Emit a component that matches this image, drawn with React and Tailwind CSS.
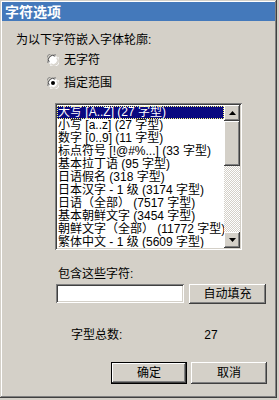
import React from "react";

const FONT = { fontFamily: '"Liberation Sans","Noto Sans CJK SC",sans-serif' };

const raised =
  "shadow-[inset_-1px_-1px_#404040,inset_1px_1px_#ffffff,inset_-2px_-2px_#808080,inset_2px_2px_#d4d0c8]";
const sunken =
  "shadow-[inset_1px_1px_#808080,inset_-1px_-1px_#ffffff,inset_2px_2px_#404040,inset_-2px_-2px_#d4d0c8]";

function Radio({ checked }) {
  return (
    <svg width="12" height="12" viewBox="0 0 12 12" className="shrink-0">
      <circle cx="6" cy="6" r="5" fill="#fff" />
      <path d="M1.2 9 A5.5 5.5 0 0 1 9 1.2" stroke="#808080" strokeWidth="1" fill="none" />
      <path d="M2.2 8.2 A4.3 4.3 0 0 1 8.2 2.2" stroke="#404040" strokeWidth="1" fill="none" />
      <path d="M10.8 3 A5.5 5.5 0 0 1 3 10.8" stroke="#ffffff" strokeWidth="1" fill="none" />
      <path d="M9.8 3.8 A4.3 4.3 0 0 1 3.8 9.8" stroke="#d4d0c8" strokeWidth="1" fill="none" />
      {checked && <circle cx="6" cy="6" r="2" fill="#000" />}
    </svg>
  );
}

const items = [
  "大写 [A..Z] (27 字型)",
  "小写 [a..z] (27 字型)",
  "数字 [0..9] (11 字型)",
  "标点符号 [!@#%...] (33 字型)",
  "基本拉丁语 (95 字型)",
  "日语假名 (318 字型)",
  "日本汉字 - 1 级 (3174 字型)",
  "日语（全部） (7517 字型)",
  "基本朝鲜文字 (3454 字型)",
  "朝鲜文字（全部） (11772 字型)",
  "繁体中文 - 1 级 (5609 字型)",
];

export default function App() {
  return (
    <div className="w-[279px] h-[400px] bg-[#d4d0c8]" style={FONT}>
      <div
        className={`w-[277px] h-[398px] bg-[#d4d0c8] flex flex-col text-[12px] leading-[14px] text-black shadow-[inset_-1px_-1px_#404040,inset_1px_1px_#d4d0c8,inset_-2px_-2px_#808080,inset_2px_2px_#ffffff]`}
      >
        <div className="mt-[2px] mx-[2px] h-[19px] bg-[#4479bb] flex items-center pl-[3px] text-white font-bold text-[14px]">
          字符选项
        </div>

        <div className="mt-[12px] ml-[16px] h-[14px]">为以下字符嵌入字体轮廓:</div>

        <div className="mt-[6px] ml-[47px] h-[14px] flex items-center gap-[5px]">
          <Radio />
          <span>无字符</span>
        </div>
        <div className="mt-[9px] ml-[47px] h-[14px] flex items-center gap-[5px]">
          <Radio checked />
          <span>指定范围</span>
        </div>

        <div className={`mt-[13px] ml-[55px] w-[187px] h-[147px] bg-white p-[2px] flex ${sunken}`}>
          <div className="flex-1 min-w-0 overflow-hidden pt-[1px]">
            {items.map((t, i) => (
              <div
                key={t}
                className={`h-[13px] leading-[13px] whitespace-nowrap pl-[1px] ${
                  i === 0
                    ? "bg-[#0a0a80] text-white outline outline-1 outline-dotted outline-[#ffff80] -outline-offset-1"
                    : ""
                }`}
              >
                {t}
              </div>
            ))}
          </div>
          <div className="w-[16px] flex flex-col bg-[length:2px_2px] bg-[conic-gradient(#ffffff_25%,#d4d0c8_0_50%,#ffffff_0_75%,#d4d0c8_0)]">
            <div className={`h-[16px] bg-[#d4d0c8] flex items-center justify-center ${raised}`}>
              <svg width="7" height="4" viewBox="0 0 7 4">
                <path d="M3.5 0 L7 4 L0 4 Z" fill="#000" />
              </svg>
            </div>
            <div className={`h-[45px] bg-[#d4d0c8] ${raised}`} />
            <div className="flex-1" />
            <div className={`h-[16px] bg-[#d4d0c8] flex items-center justify-center ${raised}`}>
              <svg width="7" height="4" viewBox="0 0 7 4">
                <path d="M0 0 L7 0 L3.5 4 Z" fill="#000" />
              </svg>
            </div>
          </div>
        </div>

        <div className="mt-[17px] ml-[58px] h-[14px]">包含这些字符:</div>

        <div className="mt-[3px] ml-[56px] flex items-start gap-[5px]">
          <div className={`w-[128px] h-[19px] bg-white ${sunken}`} />
          <div className={`w-[77px] h-[20px] flex items-center justify-center ${raised}`}>
            自动填充
          </div>
        </div>

        <div className="mt-[24px] h-[14px] flex">
          <span className="ml-[71px]">字型总数:</span>
          <span className="ml-[82px]">27</span>
        </div>

        <div className="mt-[20px] ml-[111px] flex gap-[4px]">
          <div className={`w-[76px] h-[22px] border border-black flex items-center justify-center ${raised}`}>
            确定
          </div>
          <div className={`w-[76px] h-[22px] flex items-center justify-center ${raised}`}>
            取消
          </div>
        </div>
      </div>
    </div>
  );
}
